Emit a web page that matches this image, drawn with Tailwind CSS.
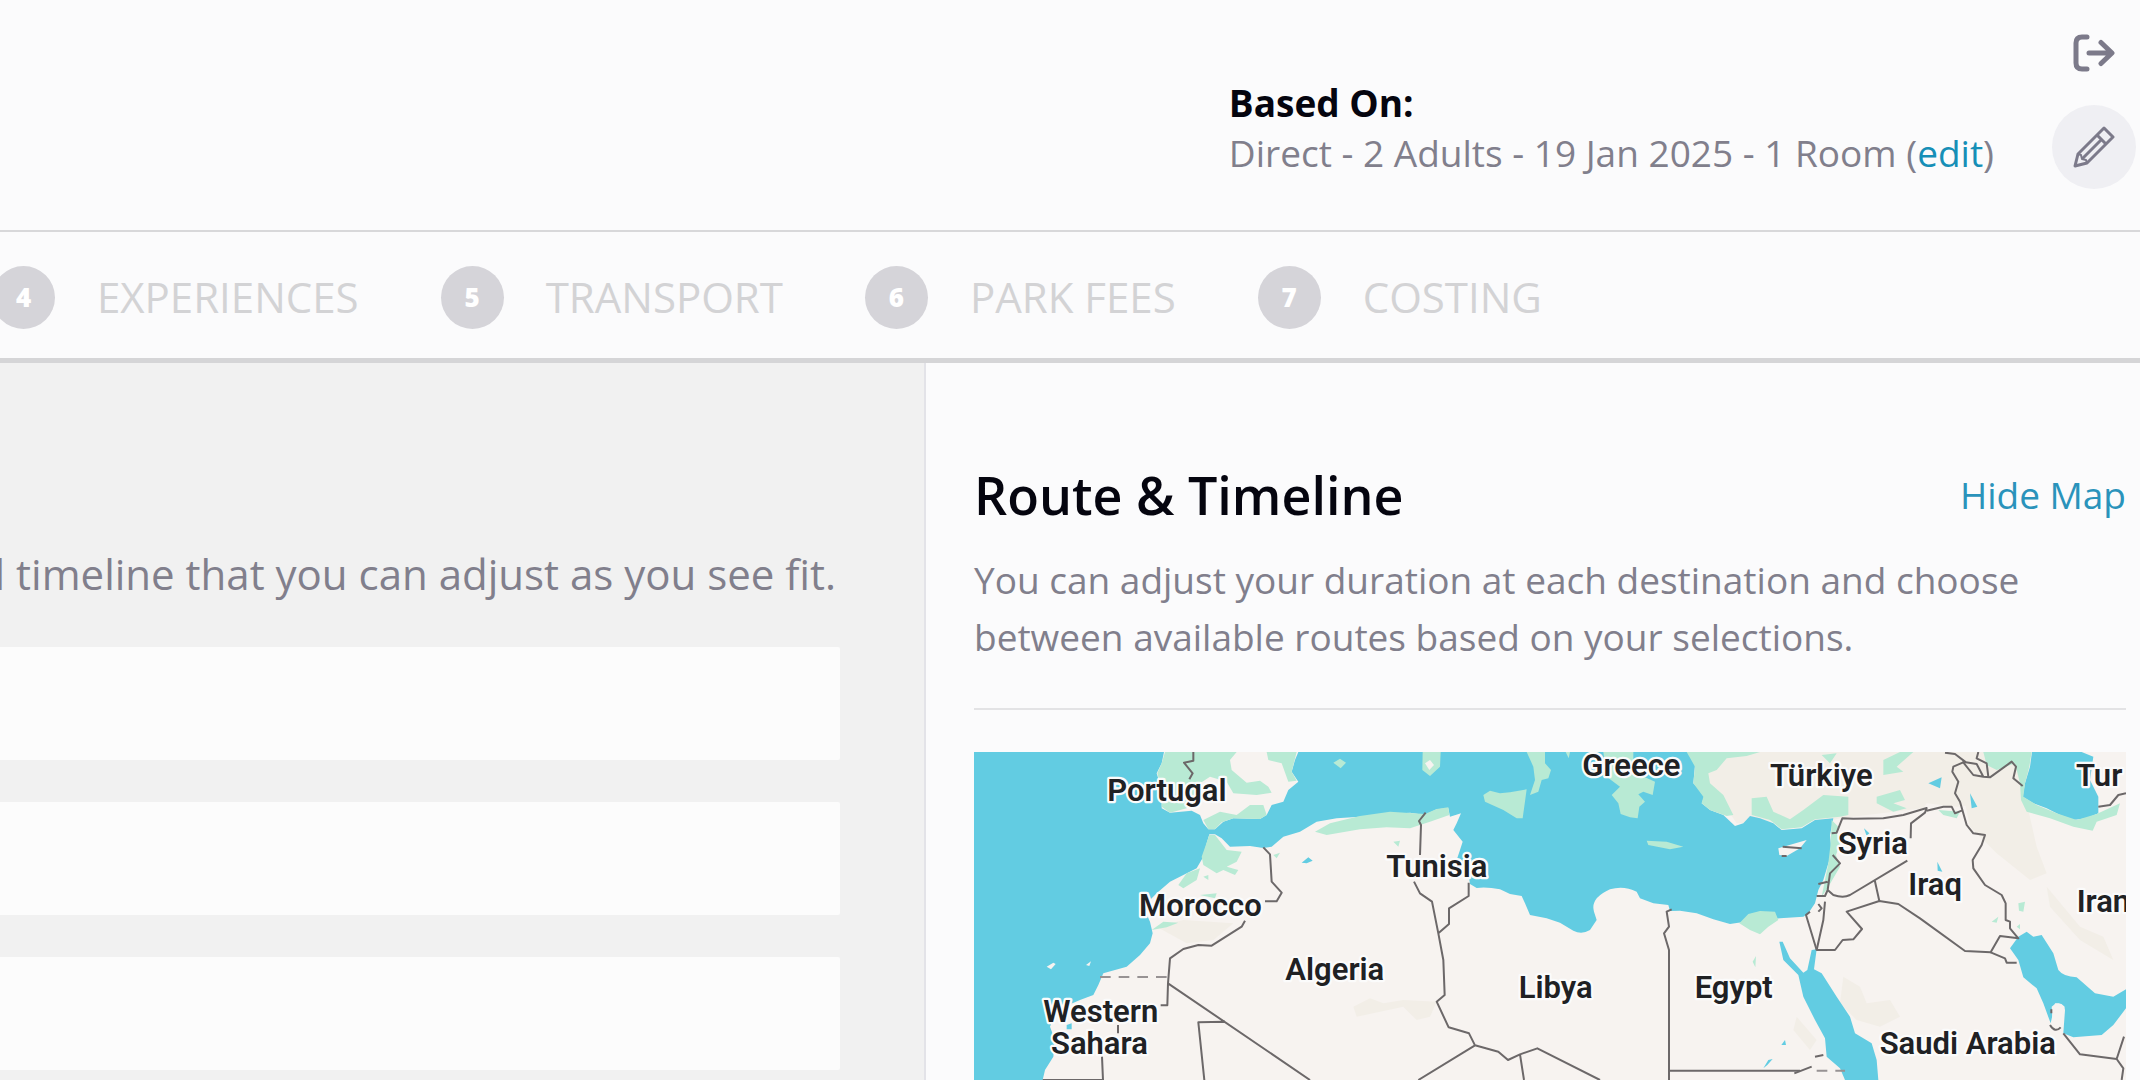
<!DOCTYPE html>
<html lang="en">
<head>
  <meta charset="UTF-8" />
  <meta name="viewport" content="width=device-width, initial-scale=1.0"/>
  <title>Route &amp; Timeline</title>
  <script src="https://cdn.jsdelivr.net/npm/@tailwindcss/browser@4"></script>
</head>
<body class="min-h-screen flex flex-col overflow-hidden bg-[#fbfbfc] text-[37px] text-[#817f8c] font-['Open_Sans',sans-serif]">

  <header class="flex justify-end gap-[58px] border-b-2 border-[#d8d8da] pr-1 pb-[41px]">
    <div class="pt-[78px] leading-[50px]">
      <p class="font-bold text-[#05050f]">Based On:</p>
      <p>Direct - 2 Adults - 19 Jan 2025 - 1 Room (<a href="#edit" class="text-[#168fb7]">edit</a>)</p>
    </div>
    <div class="flex flex-col items-center gap-[33px] pt-[34px]">
      <button type="button" aria-label="Sign out">
        <svg class="block w-[42px] h-[38px]" viewBox="0 0 42 38" fill="none" stroke="#7c7a8a" stroke-width="5" stroke-linecap="round" stroke-linejoin="round">
          <path d="M14 3H9Q3 3 3 9V29Q3 35 9 35H14"/>
          <path d="M16 19H38M28 8.5L39 19L28 29.5"/>
        </svg>
      </button>
      <button type="button" aria-label="Edit" class="flex size-[84px] items-center justify-center rounded-full bg-[#efeff3]">
        <svg class="block size-[42px]" viewBox="0 0 42 42" fill="none" stroke="#7c7a8a" stroke-width="3" stroke-linejoin="round">
          <path d="M2 40L5 28L31 2L40 11L14 37Z"/>
          <path d="M24 9L33 18M9 33L28 14"/>
          <path d="M5 28L8 29L9 33L13 34L14 37" stroke-width="2"/>
        </svg>
      </button>
    </div>
  </header>

  <nav class="border-b-[5px] border-[#d5d5d7] pt-[33px] pb-[29px]">
    <ol class="-ml-2 flex items-center gap-[82px] text-[42px] leading-[64px] text-[#d3d3d5]">
      <li class="flex items-center gap-[42px]"><span class="flex size-[63px] items-center justify-center rounded-full bg-[#d5d4d9] text-[26px] font-extrabold text-white">4</span>EXPERIENCES</li>
      <li class="flex items-center gap-[42px]"><span class="flex size-[63px] items-center justify-center rounded-full bg-[#d5d4d9] text-[26px] font-extrabold text-white">5</span>TRANSPORT</li>
      <li class="flex items-center gap-[42px]"><span class="flex size-[63px] items-center justify-center rounded-full bg-[#d5d4d9] text-[26px] font-extrabold text-white">6</span>PARK FEES</li>
      <li class="flex items-center gap-[42px]"><span class="flex size-[63px] items-center justify-center rounded-full bg-[#d5d4d9] text-[26px] font-extrabold text-white">7</span>COSTING</li>
    </ol>
  </nav>

  <div class="flex grow">
    <main class="min-w-0 flex-1 bg-[#f1f1f1] pr-[84px] pt-[179px]">
      <p class="flex justify-end whitespace-nowrap pr-1 text-[42px] leading-[64px]">l timeline that you can adjust as you see fit.</p>
      <div class="mt-[41px] flex flex-col gap-[42px]">
        <div class="h-[113px] rounded-r-xs bg-[#fcfcfc]"></div>
        <div class="h-[113px] rounded-r-xs bg-[#fcfcfc]"></div>
        <div class="h-[113px] rounded-r-xs bg-[#fcfcfc]"></div>
      </div>
    </main>

    <aside class="w-[1216px] border-l-2 border-[#e3e3e8] pl-12 pr-[14px] pt-[98px]">
      <div class="flex items-center justify-between">
        <h1 class="text-[52px] leading-[68px] font-semibold text-[#05050f]">Route &amp; Timeline</h1>
        <a href="#map" class="text-[#2a93bb]">Hide Map</a>
      </div>
      <p class="mt-[22px] leading-[57px]">You can adjust your duration at each destination and choose between available routes based on your selections.</p>
      <hr class="mt-[43px] mb-[42px] border-t-2 border-[#e3e3e5]" />

      <!-- map -->
      <svg id="map" class="block w-full" viewBox="12 36 3456 984" role="img" aria-label="Map">
        <rect x="12" y="36" width="3456" height="984" fill="#f7f3f0"/>

        <!-- terrain -->
        <g fill="#f2eee7">
          <path d="M2155 36H3170L3180 160L3050 190L2960 200L2870 190L2860 205L2610 235L2590 240L2300 250Z"/>
          <path d="M560 560L640 540L790 550L730 600L650 610Z"/>
          <path d="M1150 800L1200 775L1240 790L1300 780L1400 785L1380 830L1340 840L1300 800L1160 830Z"/>
          <path d="M2620 710L2670 740L2690 790L2760 780L2790 830L2730 860L2660 840L2610 790Z"/>
          <path d="M2970 120L3150 100L3200 320L3230 400L3180 420L3080 340L3000 260Z"/>
          <path d="M3230 440L3330 560L3400 590L3430 660L3330 600L3240 500Z"/>
          <path d="M2480 830L2540 900L2520 930L2470 870Z"/>
        </g>

        <!-- seas -->
        <g fill="#62cce2">
          <path d="M12 36H582L575 70L560 100L575 150V205L600 218L665 212L690 225L700 250L715 268H735L760 245L790 235L870 237L890 225L905 195L940 185L955 150L985 125L965 95L975 60L985 36H2155L2175 75L2170 130L2205 165L2195 190L2220 210L2260 225L2295 258L2320 250L2340 228L2370 235L2410 250L2435 270L2495 265L2535 240L2590 235L2580 285L2585 340L2575 370L2560 420L2545 450L2535 490L2515 520L2500 530L2430 535L2305 548L2280 552L2230 538L2180 520L2130 512L2100 513L2095 495L2050 490L2010 475L2000 455Q1960 435 1920 448Q1860 475 1872 515L1880 540L1860 570Q1835 585 1810 572L1770 548L1730 535L1680 525L1665 490L1655 468L1620 462L1590 448Q1550 440 1520 444L1500 432L1495 400L1460 360L1470 330L1478 305L1450 270L1460 250L1473 220L1440 230L1435 205L1400 208L1365 225L1320 218L1260 222L1215 232L1170 230L1100 235L1040 245L990 275L940 290L905 320L880 324L840 318L780 320L755 295L735 283H718L710 310L700 350L680 385L640 405L600 425L560 460L520 500L540 545L548 580L540 610L510 645L470 680L400 700L385 735L370 765L330 780L260 810L240 860L255 900L250 950L225 990L218 1020H12Z"/>
          <path d="M3186 36H3335L3370 50L3360 120L3385 170V220L3350 235L3310 240L3270 225L3230 205L3190 190L3158 170L3165 130L3180 80Z"/>
          <path d="M3145 590L3170 575L3190 590L3215 585L3250 640L3265 690Q3280 710 3320 712L3375 760L3430 770L3468 748V805L3430 855L3395 885L3310 892L3280 880L3285 810Q3280 788 3255 790L3242 850L3220 790L3200 745L3160 712L3145 660L3120 625Z"/>
          <path d="M2485 705L2440 660L2428 605H2438L2460 655L2500 698L2512 690L2525 630L2540 628L2532 688L2555 700L2600 770L2640 830L2655 880L2705 910L2720 960L2725 1020H2625L2610 985L2570 950L2565 895L2535 840L2500 770Z"/>
          <path d="M2875 130L2915 112L2910 145ZM3000 160L3022 200L3005 205ZM2902 365L2917 395L2903 392ZM995 368L1015 352L1028 362L1010 370ZM2434 915L2445 900L2448 915ZM2380 985L2395 960L2408 957L2392 975ZM2682 265L2698 280L2690 288ZM290 855L305 850V868H290Z"/>
        </g>

        <!-- vegetation -->
        <g fill="#b8ead4">
          <path d="M585 36H800L780 60L785 90L830 128L870 122L895 140L905 158L860 165L790 160L770 125L720 110L690 130L650 205L600 218L575 200V150L562 100L575 70ZM890 36H980L965 95L980 122L955 125L935 70L895 60ZM700 240L750 215L800 225L840 195L880 195L890 225L870 237L790 235L755 247L735 268H715Z"/>
          <path d="M718 285L735 285L770 330L815 335L800 365L770 380L805 390L795 405L760 390L740 400L700 375L695 350ZM625 435L650 400L690 385L680 420L640 445ZM545 570L580 545L625 548L590 562ZM690 465L740 460L735 475ZM700 410L715 405V420Z"/>
          <path d="M1035 275L1080 250L1170 228L1260 215L1365 222L1400 207L1435 202L1438 225L1380 245L1320 265L1250 262L1170 268L1070 285Z"/>
          <path d="M1358 36H1412L1410 80L1380 108L1357 90ZM1540 165L1560 152L1590 160L1620 157L1670 148L1658 235L1640 235L1600 210L1545 185ZM1670 36H1725V70L1743 90L1735 115L1715 120L1705 155L1680 165L1695 120L1690 80ZM1787 36H1800L1796 55ZM1090 68L1110 56L1128 68L1112 85Z"/>
          <path d="M1900 36H1990V60L1960 80L2010 105L2055 125L2048 165L2020 155L2005 163L2025 185L2008 200L2003 235L1980 232L1952 222L1945 190L1925 165L1950 140L1910 110ZM2030 302L2090 305L2140 320L2100 328L2035 315Z"/>
          <path d="M2150 36H2370L2330 48L2270 55L2240 90L2215 100L2220 130L2260 165L2290 225L2270 228L2220 210L2195 190L2200 170L2170 130L2175 80ZM2345 175L2390 170L2410 215L2460 238L2500 210L2560 165L2635 170L2635 225L2610 230L2535 238L2495 262L2435 268L2400 240L2345 225Z"/>
          <path d="M2555 45L2600 40L2580 70ZM2740 60L2790 36H2830L2780 80L2800 95L2740 105ZM2720 170L2790 150L2805 180L2770 190L2810 205L2770 215L2720 190ZM2905 210L2970 215L2960 235L2920 225ZM2585 240L2605 260L2600 280L2610 310L2598 345L2610 380L2575 440L2555 470L2575 370L2582 310Z"/>
          <path d="M3040 36H3185L3178 80L3165 130L3160 170L3200 195L3260 220L3320 240L3380 222L3450 190L3440 225L3380 245L3368 272L3310 260L3240 235L3170 215L3153 180L3150 130L3135 70L3080 90L3050 75Z"/>
          <path d="M2308 550L2335 522L2370 513L2415 515L2425 540L2395 560L2370 583L2340 570ZM3145 490L3165 485L3160 515L3147 512ZM3065 545L3085 530L3080 548ZM3140 560L3150 552V568ZM2348 665L2358 648L2356 682ZM1270 305L1290 302L1285 320ZM910 345L930 338L920 355Z"/>
        </g>
        <g fill="#f7f3f0">
          <path d="M2425 325L2510 300L2490 325L2450 348L2428 345Z"/>
          <path d="M230 680L250 668L257 672L243 688ZM348 675L363 664L358 678Z"/>
          <path d="M3245 800Q3265 780 3284 800L3280 845Q3265 870 3248 850Z"/>
          <path d="M1365 70L1380 60L1392 75L1378 90Z"/>
        </g>

        <!-- borders -->
        <g fill="none" stroke="#6c6869" stroke-width="6" stroke-linejoin="round">
          <path d="M670 36V62L642 68L668 100L658 118M880 322L900 343L905 425L935 458L920 484H885M825 542L815 560L725 617L685 615L640 627L600 655L594 730L592 796H572M594 730L1020 1020M765 845L685 847L703 1020M444 855V880M396 950L399 1020M218 1020H399"/>
          <path d="M1367 218L1347 243L1353 255L1350 345M1332 425L1350 460L1386 485L1405 580L1420 660L1424 765L1400 785L1436 862L1497 880L1515 916L1345 1020M1405 580L1437 552V505L1496 468V428M1515 916L1585 935L1614 960L1650 943L1702 925L1890 1020M1650 943L1662 1020M2105 508L2090 515L2097 560L2082 580L2097 630V1020M2097 992H2490"/>
          <path d="M2585 280L2600 278L2617 235L2650 236L2740 235L2800 225L2870 204L2865 218L2823 250L2822 295M2870 212L2920 200L2945 200L2955 220L2975 212M2925 38L2955 42L2985 65L2950 80L2947 95L2965 125L2955 160L2970 185L2990 255L3010 280L3045 285L3035 315L3008 360L3010 385L3045 435L3095 465L3107 490V540L3120 545V565L3145 595L3090 588L3062 637L2985 633L2850 535L2785 492L2728 483L2630 515L2676 567L2650 598L2618 600L2595 630L2540 630L2508 525L2520 515"/>
          <path d="M2588 345L2610 370L2580 400L2573 450L2590 465Q2620 475 2640 465L2812 362M2714 420L2728 483M2573 425L2545 432M2573 450L2565 468H2540M2565 485L2560 540L2540 630M2978 65L3010 105L3040 110L3060 112L3125 65L3138 80L3130 115L3158 138M2978 65L3020 72L3040 110M3025 36L3020 55L3050 70L3055 110M3062 637L3105 655L3110 668H3140M3240 855Q3255 880 3272 862M3280 880L3330 943L3440 957L3462 890M3440 957L3460 985L3455 1020M3385 200L3420 195L3445 165L3468 160M2438 320L2495 325M2435 348H2450M2545 492L2555 505L2545 515"/>
          <path d="M2473 1000L2525 980M2535 950L2560 945M3244 808V820"/>
          <path stroke="#979293" stroke-dasharray="32 24" d="M390 711H592M2540 992H2625"/>
        </g>

        <g class="font-['Roboto',sans-serif] font-semibold" font-size="93" fill="#202124" stroke="#fbfbfb" stroke-width="14" stroke-linejoin="round" paint-order="stroke">
          <text x="412" y="183">Portugal</text>
          <text x="507" y="527">Morocco</text>
          <text x="220" y="845">Western</text>
          <text x="243" y="941">Sahara</text>
          <text x="946" y="720">Algeria</text>
          <text x="1249" y="410">Tunisia</text>
          <text x="1837" y="107">Greece</text>
          <text x="1646" y="775">Libya</text>
          <text x="2174" y="775">Egypt</text>
          <text x="2400" y="138">Türkiye</text>
          <text x="2603" y="343">Syria</text>
          <text x="2815" y="465">Iraq</text>
          <text x="3318" y="137">Tur</text>
          <text x="3320" y="517">Iran</text>
          <text x="2729" y="942">Saudi Arabia</text>
        </g>
      </svg>
    </aside>
  </div>
</body>
</html>
